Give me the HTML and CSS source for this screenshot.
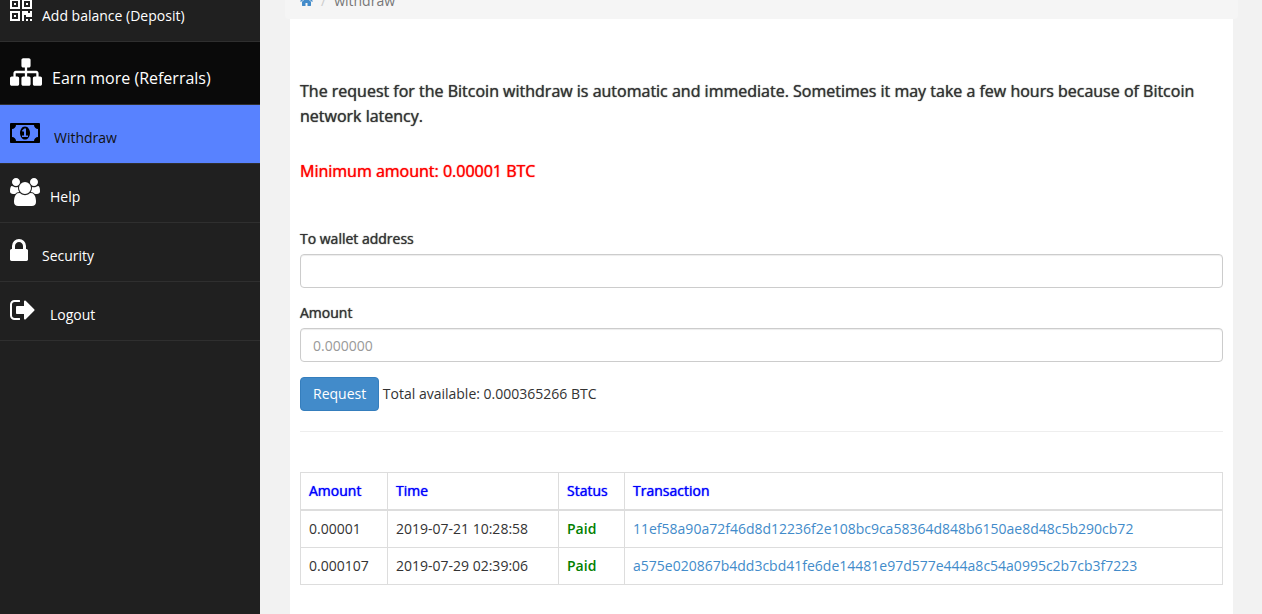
FILE: index.html
```html
<!DOCTYPE html>
<html lang="en">
<head>
    <meta charset="UTF-8">
    <meta name="viewport" content="width=device-width, initial-scale=1.0">
    <title>Withdraw</title>
    <link rel="stylesheet" href="styles.css">
</head>
<body>

<div class="wrapper">
    <nav class="sidebar">
        <a href="#"><svg width="22" height="28" viewBox="0 0 1408 1792"><path d="M384 1152v128h-128v-128h128zm0-768v128h-128v-128h128zm768 0v128h-128v-128h128zm-1024 1023h384v-383h-384v383zm0-767h384v-384h-384v384zm768 0h384v-384h-384v384zm-256 256v640h-640v-640h640zm512 512v128h-128v-128h128zm256 0v128h-128v-128h128zm0-512v384h-384v-128h-128v384h-128v-640h384v128h128v-128h128zm-768-768v640h-640v-640h640zm768 0v640h-640v-640h640z"/></svg>Add balance (Deposit)</a>
        <a href="#" class="referrals"><svg width="32" height="32" viewBox="0 0 1792 1792"><path d="M1792 1248v320q0 40-28 68t-68 28h-320q-40 0-68-28t-28-68v-320q0-40 28-68t68-28h96v-192h-512v192h96q40 0 68 28t28 68v320q0 40-28 68t-68 28h-320q-40 0-68-28t-28-68v-320q0-40 28-68t68-28h96v-192h-512v192h96q40 0 68 28t28 68v320q0 40-28 68t-68 28h-320q-40 0-68-28t-28-68v-320q0-40 28-68t68-28h96v-192q0-52 38-90t90-38h512v-192h-96q-40 0-68-28t-28-68v-320q0-40 28-68t68-28h320q40 0 68 28t28 68v320q0 40-28 68t-68 28h-96v192h512q52 0 90 38t38 90v192h96q40 0 68 28t28 68z"/></svg>Earn more (Referrals)</a>
        <a href="#" class="active wide"><svg width="30" height="28" viewBox="0 0 1920 1792"><path d="M768 1152h384v-96h-128v-448h-114l-148 137 77 80q42-37 55-57h2v288h-128v96zm512-256q0 70-21 142t-59.500 134-101.500 101-138 39-138-39-101.500-101-59.500-134-21-142 21-142 59.500-134 101.500-101 138-39 138 39 101.500 101 59.500 134 21 142zm512 256v-512q-106 0-181-75t-75-181h-1152q0 106-75 181t-181 75v512q106 0 181 75t75 181h1152q0-106 75-181t181-75zm128-832v1152q0 26-19 45t-45 19h-1792q-26 0-45-19t-19-45v-1152q0-26 19-45t45-19h1792q26 0 45 19t19 45z"/></svg>Withdraw</a>
        <a href="#"><svg width="30" height="28" viewBox="0 0 1920 1792"><path d="M593 896q-162 5-265 128h-134q-82 0-138-40.500t-56-118.500q0-353 124-353 6 0 43.500 21t97.500 42.500 119 21.500q67 0 133-23-5 37-5 66 0 139 81 256zm1071 637q0 120-73 189.500t-194 69.500h-874q-121 0-194-69.500t-73-189.500q0-53 3.500-103.500t14-109 26.500-108.500 43-97.500 62-81 85.500-53.500 111.500-20q10 0 43 21.500t73 48 107 48 135 21.500 135-21.500 107-48 73-48 43-21.500q61 0 111.500 20t85.500 53.500 62 81 43 97.500 26.500 108.500 14 109 3.500 103.500zm-1024-1277q0 106-75 181t-181 75-181-75-75-181 75-181 181-75 181 75 75 181zm704 384q0 159-112.500 271.500t-271.500 112.500-271.500-112.500-112.500-271.500 112.500-271.500 271.500-112.500 271.500 112.500 112.500 271.500zm576 225q0 78-56 118.500t-138 40.500h-134q-103-123-265-128 81-117 81-256 0-29-5-66 66 23 133 23 59 0 119-21.500t97.500-42.500 43.500-21q124 0 124 353zm-128-609q0 106-75 181t-181 75-181-75-75-181 75-181 181-75 181 75 75 181z"/></svg>Help</a>
        <a href="#" class="wide"><svg width="18" height="28" viewBox="0 0 1152 1792"><path d="M320 768h512v-192q0-106-75-181t-181-75-181 75-75 181v192zm832 96v576q0 40-28 68t-68 28h-960q-40 0-68-28t-28-68v-576q0-40 28-68t68-28h32v-192q0-184 132-316t316-132 316 132 132 316v192h32q40 0 68 28t28 68z"/></svg>Security</a>
        <a href="#" class="wide"><svg width="26" height="28" viewBox="0 0 1664 1792"><path d="M640 1440q0 4 1 20t.5 26.500-3 23.500-10 19.500-20.500 6.500h-320q-119 0-203.500-84.500t-84.500-203.500v-704q0-119 84.500-203.500t203.500-84.500h320q13 0 22.500 9.500t9.500 22.500q0 4 1 20t.5 26.500-3 23.500-10 19.500-20.500 6.500h-320q-66 0-113 47t-47 113v704q0 66 47 113t113 47h312l11.500 1 11.500 3 8 5.500 7 9 2 13.500zm928-544q0 26-19 45l-544 544q-19 19-45 19t-45-19-19-45v-288h-448q-26 0-45-19t-19-45v-384q0-26 19-45t45-19h448v-288q0-26 19-45t45-19 45 19l544 544q19 19 19 45z"/></svg>Logout</a>
    </nav>

    <main class="content">
        <ol class="breadcrumb">
            <li><a href="#" aria-label="Home"><svg width="13" height="14" viewBox="0 0 1664 1792"><path d="M1408 992v480q0 26-19 45t-45 19h-384v-384h-256v384h-384q-26 0-45-19t-19-45v-480q0-1 .5-3t.5-3l575-474 575 474q1 2 1 6zm223-69l-62 74q-8 9-21 11h-3q-13 0-21-7l-692-577-692 577q-12 8-24 7-13-2-21-11l-62-74q-8-10-7-23.500t11-21.500l719-599q32-26 76-26t76 26l244 204v-195q0-14 9-23t23-9h192q14 0 23 9t9 23v408l219 182q10 8 11 21.500t-7 23.500z"/></svg></a></li>
            <li>withdraw</li>
        </ol>

        <div class="panel">
            <p class="notice">The request for the Bitcoin withdraw is automatic and immediate. Sometimes it may take a few hours because of Bitcoin network latency.</p>
            <p class="notice minimum">Minimum amount: 0.00001 BTC</p>

            <form>
                <label for="address">To wallet address</label>
                <input type="text" id="address">

                <label for="amount">Amount</label>
                <input type="text" id="amount" placeholder="0.000000">

                <button type="button">Request</button>
                <span>Total available: 0.000365266 BTC</span>
            </form>

            <hr>

            <table>
                <thead>
                    <tr>
                        <th class="col-amount">Amount</th>
                        <th class="col-time">Time</th>
                        <th class="col-status">Status</th>
                        <th>Transaction</th>
                    </tr>
                </thead>
                <tbody>
                    <tr>
                        <td>0.00001</td>
                        <td>2019-07-21 10:28:58</td>
                        <td class="paid">Paid</td>
                        <td><a href="#">11ef58a90a72f46d8d12236f2e108bc9ca58364d848b6150ae8d48c5b290cb72</a></td>
                    </tr>
                    <tr>
                        <td>0.000107</td>
                        <td>2019-07-29 02:39:06</td>
                        <td class="paid">Paid</td>
                        <td><a href="#">a575e020867b4dd3cbd41fe6de14481e97d577e444a8c54a0995c2b7cb3f7223</a></td>
                    </tr>
                </tbody>
            </table>
        </div>
    </main>
</div>

</body>
</html>
```
FILE: styles.css
```css
* {
    box-sizing: border-box;
}
body {
    margin: 0;
    font-family: 'Open Sans', sans-serif;
    font-size: 14px;
    line-height: 20px;
    color: #333;
    background-color: #f2f2f2;
}
a {
    color: #428bca;
    text-decoration: none;
}
svg {
    fill: currentColor;
}
.wrapper {
    display: flex;
    min-height: calc(100vh + 17px);
    margin-top: -17px;
}
.sidebar {
    flex: 0 0 260px;
    background-color: #202020;
}
.sidebar a {
    display: block;
    padding: 14px 10px 15px;
    border-bottom: 1px solid #2f2f2f;
    color: #fff;
}
.sidebar svg {
    margin-right: 10px;
    vertical-align: -4px;
}
.sidebar .wide svg {
    margin-right: 14px;
}
.sidebar .referrals {
    padding-bottom: 16px;
    background-color: #0a0a0a;
    font-size: 16px;
}
.sidebar .active {
    background-color: #5882ff;
    color: #111;
}
.sidebar .active svg {
    color: #000;
}
.content {
    flex: 1;
    display: flex;
    flex-direction: column;
    min-width: 0;
    padding: 0 24px 0 25px;
}
.breadcrumb {
    display: flex;
    margin: 0;
    padding: 8px 15px;
    list-style: none;
    background-color: #f5f5f5;
    border-radius: 4px;
    color: #777;
}
.breadcrumb li + li::before {
    content: "/";
    padding: 0 8px;
    color: #ccc;
}
.breadcrumb svg {
    vertical-align: -2px;
}
.panel {
    flex: 1;
    margin: 0 5px;
    padding: 60px 10px 20px;
    background-color: #fff;
}
.notice {
    margin: 0 0 30px;
    font-size: 16px;
    line-height: 25px;
}
.minimum {
    margin-bottom: 45px;
    color: #f00;
}
.notice, label, th {
    text-shadow: 0 0 1px currentColor;
}
label {
    display: block;
    margin-bottom: 5px;
}
input {
    display: block;
    width: 100%;
    height: 34px;
    margin-bottom: 15px;
    padding: 6px 12px;
    border: 1px solid #ccc;
    border-radius: 4px;
    box-shadow: inset 0 1px 1px rgba(0, 0, 0, 0.075);
    color: #555;
    font: inherit;
}
input::placeholder {
    color: #999;
}
button {
    padding: 6px 12px;
    border: 1px solid #357ebd;
    border-radius: 4px;
    background-color: #428bca;
    color: #fff;
    font: inherit;
    cursor: pointer;
}
hr {
    margin: 20px 0 40px;
    border: 0;
    border-top: 1px solid #eee;
}
table {
    width: 100%;
    border-collapse: collapse;
}
th, td {
    padding: 8px;
    border: 1px solid #ddd;
    text-align: left;
}
th {
    border-bottom-width: 2px;
    color: #00f;
    font-weight: 400;
}
.col-amount {
    width: 87px;
}
.col-time {
    width: 171px;
}
.col-status {
    width: 66px;
}
.paid {
    color: #008000;
    font-weight: 600;
}
```
